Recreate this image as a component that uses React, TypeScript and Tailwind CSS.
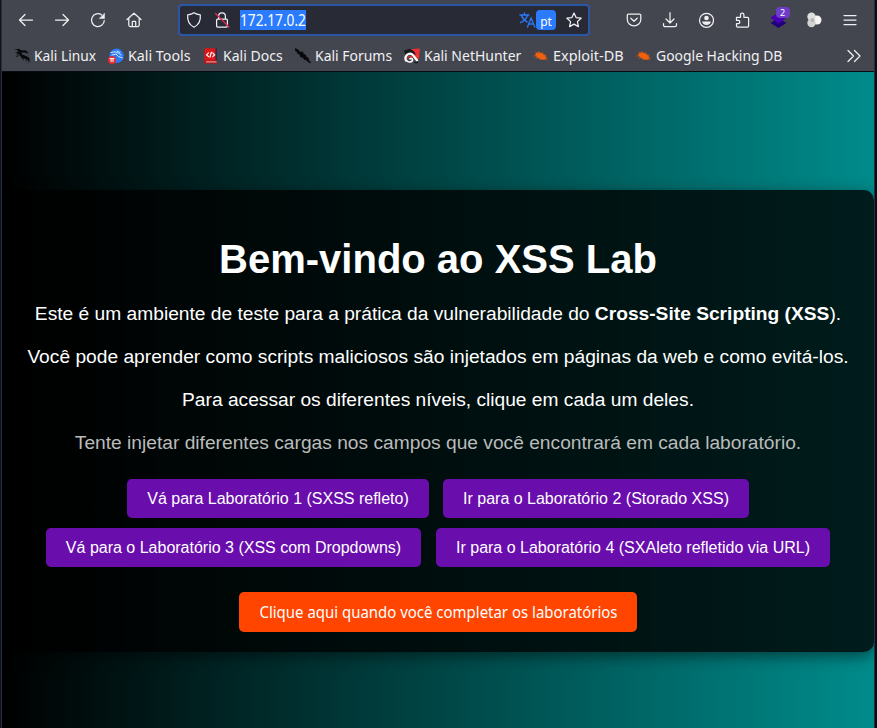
import React from "react";

const ui = "font-['Noto_Sans',sans-serif]";

function Icon({ children, size = 16 }: { children: React.ReactNode; size?: number }) {
  return (
    <svg
      width={size}
      height={size}
      viewBox="0 0 16 16"
      fill="none"
      stroke="currentColor"
      strokeWidth="1.25"
      strokeLinecap="round"
      strokeLinejoin="round"
      className="shrink-0"
    >
      {children}
    </svg>
  );
}

function ToolButton({ children }: { children: React.ReactNode }) {
  return <button className="flex h-8 w-9 items-center justify-center">{children}</button>;
}

const bookmarks = [
  {
    label: "Kali Linux",
    width: "w-[62px]",
    scale: "scale-x-[0.918]",
    icon: (
      <Icon>
        <path d="M.5 1.800 4.500.8l3 1.400 4.500.300L14.500 5l-1.300.6L11 4.400 7.500 4.600 8 6.600l3.500 1.200 3 1.400 1.300 2.300-.8 3.700-1-3.200-2.500-1.200-3.500-.6L6 7.600 5 6 1.500 7.200 4 5.200 1 4.800 4.600 3.600 3.500 2.300Z" fill="#08090b" stroke="none" />
        <path d="M8 9.500 9.500 12M12 11.500l.500 1.500M2.500 8.500 5 7.500" stroke="#08090b" strokeWidth=".8" />
      </Icon>
    ),
  },
  {
    label: "Kali Tools",
    width: "w-[63px]",
    scale: "scale-x-[0.95]",
    icon: (
      <Icon>
        <circle cx="8.600" cy="7.800" r="7.200" fill="#2a7af5" stroke="none" />
        <path d="M3 4.500 7 3.800l3.500 1.400L13 7M4 7l4-1 2.500 2.600 3.800 1.200M9 3l3 1.500" stroke="#d6e8ff" strokeWidth="1" />
        <circle cx="4" cy="12" r="4" fill="#e02b2e" stroke="none" />
        <path d="M2 10.600h4M3.100 10.700v3M5 10.700v3" stroke="#fff" strokeWidth="1" />
      </Icon>
    ),
  },
  {
    label: "Kali Docs",
    width: "w-[60px]",
    scale: "scale-x-[0.935]",
    icon: (
      <Icon>
        <path d="M1.500.3h12v12.500h-12z" fill="#e01414" stroke="none" />
        <path d="M12.400.3h1.600V13h-1.600z" fill="#272c54" stroke="none" />
        <path d="M1.500 12.600H14v3H1.500z" fill="#c21014" stroke="none" />
        <path d="M3 13.400h10.500v1H3z" fill="#e8b8b8" stroke="none" />
        <path d="m5.500 4.800-2 2 2 1.800m4.200-3.800 2 2-2 1.800M8.400 4.300 6.900 9.200" stroke="#fff" strokeWidth="1.200" />
      </Icon>
    ),
  },
  {
    label: "Kali Forums",
    width: "w-[77px]",
    scale: "scale-x-[0.93]",
    icon: (
      <Icon>
        <path d="M0 .5 3.500 2 5 4.400l2.500-.7L8.400 6l2.200 1 .6 2 2.200 1.200.4 2 2 2.800-3.300-1.400-.5-1.600-3-.6-.8-2L5.500 9 4.800 6.400 2.200 5.300 2.800 4 .8 3.200Z" fill="#07080a" stroke="#07080a" strokeWidth=".6" />
      </Icon>
    ),
  },
  {
    label: "Kali NetHunter",
    width: "w-[97px]",
    scale: "scale-x-[0.933]",
    icon: (
      <Icon>
        <path d="M5 1.200 15.800.6 15 10 12.500 13 8 6Z" fill="#ee3032" stroke="none" />
        <path d="M0 2.500 6 .8l4 2.400L12 7 7 5 2 9Z" fill="#15191f" stroke="none" />
        <path d="M2 12.500C0 8 4.500 4 8.500 6.600l4.500 5.600" stroke="#fff" strokeWidth="2.300" />
        <path d="M2.500 12.600c2 2.400 6 1.600 6-.8 0-1.200-1.500-1.800-2.600-1" stroke="#fff" strokeWidth="1.600" />
        <path d="M3.800 10.300c.6-2 3-2.600 4.600-.9" stroke="#e5282c" strokeWidth="1.300" />
        <path d="M11 14.500h2.500" stroke="#15191f" strokeWidth="1.300" />
      </Icon>
    ),
  },
  { label: "Exploit-DB", width: "w-[71px]", scale: "scale-x-[0.965]", icon: <Bug /> },
  { label: "Google Hacking DB", width: "w-[127px]", scale: "scale-x-[0.928]", icon: <Bug /> },
];

function Bug() {
  return (
    <Icon>
      <path d="M2.500 5.800C4 4 8 4.200 10.800 6.300c2.200 1.700 3.200 3.800 2.200 4.800-1.600 1.200-5.400.6-8-1.200C3 8.600 1.500 7 2.500 5.800Z" fill="#f0600f" stroke="none" />
      <path d="M4 5.500 2.800 4M6 5.200 5.800 3.600M8.800 5.600l1-1.200M11 7.300l2-.2M3 7.800.8 8M5 9.400 3 10.400M7.500 10.800 7 11.800M12 9.400l2 .4M12.600 11l1.400 1.200" stroke="#d9580f" strokeWidth=".8" />
    </Icon>
  );
}

function AddressBar() {
  return (
    <div className="flex h-8 w-[412px] items-center rounded border-2 border-[#2b56a5] bg-[#282a36]">
      <div className="ml-1.5 flex w-4 justify-center">
        <Icon>
          <path d="M8 .8C6.300 2 4 2.700 1.700 2.900 1.200 8.500 3.500 13 8 15.200c4.500-2.200 6.800-6.700 6.300-12.300C12 2.700 9.700 2 8 .8Z" />
        </Icon>
      </div>
      <div className="ml-3 flex w-4 justify-center">
        <Icon>
          <path d="M4.600 7V4.200a3.400 3.400 0 0 1 6.800 0V7M3.600 7.200h8.800a1 1 0 0 1 1 1V14a1 1 0 0 1-1 1H3.600a1 1 0 0 1-1-1V8.200a1 1 0 0 1 1-1Z" />
          <path d="M1.500 1.500 15 15" stroke="#e22850" />
        </Icon>
      </div>
      <div className={`${ui} ml-2.5 h-5 w-[66px] whitespace-nowrap bg-[#2a7bfd] text-[15.5px] leading-[21px] text-white`}>
        <span className="inline-block origin-left scale-x-[0.885]">172.17.0.2</span>
      </div>
      <div className="ml-auto flex items-center">
        <svg width="17" height="16" viewBox="0 0 17 16" fill="none" stroke="#2a78f6" strokeWidth="1.400" strokeLinecap="round">
          <path d="M1 3h9M5.500 1v2M8.500 3.200C7.500 6.500 5 9 1.500 10.600M2.500 3.500c1 3 3 5 5.600 6.400M8.500 15l3.600-9 3.700 9M9.800 12h4.800" />
        </svg>
        <span className={`${ui} flex h-5 w-5 items-center justify-center rounded bg-[#2a7bfd] pt-1 text-xs leading-4 text-white`}>
          pt
        </span>
        <span className="mr-1.5 ml-2.5">
          <Icon>
            <path d="m8 1 2.100 4.600 5 .600-3.700 3.400 1 5L8 12.100l-4.400 2.500 1-5L.9 6.200l5-.600Z" />
          </Icon>
        </span>
      </div>
    </div>
  );
}

function BrowserChrome() {
  return (
    <header className="h-[71px] shrink-0 bg-[#43464f] text-[#f0f0f2]">
      <div className="flex h-10 items-center pl-1.5">
        <ToolButton><Icon><path d="M14.500 8h-13M7 2.500 1.500 8 7 13.500" /></Icon></ToolButton>
        <ToolButton><Icon><path d="M1.500 8h13M9 2.500 14.500 8 9 13.500" /></Icon></ToolButton>
        <ToolButton>
          <Icon>
            <path d="M14.300 8.500A6.400 6.400 0 1 1 11.700 3" />
            <path d="M14.500 1.500v5h-5Z" fill="currentColor" strokeWidth=".5" />
          </Icon>
        </ToolButton>
        <ToolButton>
          <Icon>
            <path d="M1 7.500 8 1.200l7 6.300M2.800 6.200V13a1.500 1.500 0 0 0 1.500 1.500h7.400a1.500 1.500 0 0 0 1.500-1.500V6.200M6.300 14.300V10a.7.7 0 0 1 .7-.7h2a.7.7 0 0 1 .7.7v4.300" />
          </Icon>
        </ToolButton>
        <div className="ml-[26px]"><AddressBar /></div>
        <div className="ml-[26px] flex">
          <ToolButton>
            <Icon>
              <path d="M2.500 2h11A1.300 1.300 0 0 1 14.800 3.300V7.500a6.700 6.300 0 0 1-13.500 0V3.300A1.300 1.300 0 0 1 2.500 2ZM4.800 6.200 8 9.300l3.200-3.100" />
            </Icon>
          </ToolButton>
          <ToolButton><Icon><path d="M8 .7v10M4 7l4 4 4-4M1.500 11.500V13A1.700 1.700 0 0 0 3.200 14.700h9.600a1.700 1.700 0 0 0 1.700-1.700v-1.500" /></Icon></ToolButton>
          <ToolButton>
            <Icon>
              <circle cx="8.500" cy="8.300" r="7" />
              <circle cx="8.500" cy="6" r="2.300" fill="currentColor" stroke="none" />
              <path d="M4.200 9.600h8.600c0 2-2 3.400-4.300 3.400s-4.300-1.400-4.300-3.400Z" fill="currentColor" stroke="none" />
            </Icon>
          </ToolButton>
          <ToolButton>
            <Icon>
              <path d="M2.500 5.300h4V2.800a1.700 1.700 0 0 1 3.400 0v2.500h3.700a1 1 0 0 1 1 1V14a1 1 0 0 1-1 1H3.500a1 1 0 0 1-1-1v-2.300h1.700a1.600 1.600 0 0 0 0-3.300H2.500Z" />
            </Icon>
          </ToolButton>
          <ToolButton>
            <span className="relative flex">
              <svg width="17" height="16" viewBox="0 0 17 16">
                <path d="m.5 11 8-5 8 5-8 5Z" fill="#21007c" />
                <path d="m.5 5.800 8-5.500 8 5.500-8 6Z" fill="#4700b5" />
              </svg>
              <span className={`${ui} absolute -top-[5px] left-[6px] h-[11px] w-3.5 rounded-sm bg-[#6f3cc8] text-center text-[9px] leading-[11px] text-white`}>
                2
              </span>
            </span>
          </ToolButton>
          <ToolButton>
            <Icon>
              <g stroke="none">
                <circle cx="11" cy="8" r="4.500" fill="#f5f5f5" />
                <circle cx="5.500" cy="4.800" r="4.200" fill="#dfdfdf" />
                <circle cx="5.500" cy="11" r="4.200" fill="#d3d3d3" />
                <circle cx="6.500" cy="8" r="2" fill="#b4b4b4" />
              </g>
            </Icon>
          </ToolButton>
          <ToolButton><Icon><path d="M2 3.500h12M2 8h12M2 12.500h12" /></Icon></ToolButton>
        </div>
      </div>
      <nav className={`${ui} flex h-[31px] items-center gap-3 pl-3 text-[15px] leading-5`}>
        {bookmarks.map((b) => (
          <a key={b.label} className="flex items-center gap-1">
            {b.icon}
            <span className={`${b.width} pb-px whitespace-nowrap`}>
              <span className={`${b.scale} inline-block origin-left`}>{b.label}</span>
            </span>
          </a>
        ))}
        <span className="mr-3 ml-auto">
          <Icon><path d="m2 2.500 5.500 5.500L2 13.500M8.500 2.500 14 8l-5.500 5.500" /></Icon>
        </span>
      </nav>
    </header>
  );
}

function LabButton({ children, className }: { children: React.ReactNode; className: string }) {
  return (
    <button className={`${className} h-[39px] rounded-[5px] bg-[#6a0dad] whitespace-nowrap text-center text-base text-white`}>
      {children}
    </button>
  );
}

export default function App() {
  return (
    <div className="flex h-[728px] w-[877px] overflow-hidden bg-[#0c0e16] font-['Liberation_Sans',Arial,sans-serif]">
      <div className="w-0.5 shrink-0 border-r border-[#2b2d3a] bg-[#0b1420]" />
      <div className="flex w-[872px] shrink-0 flex-col overflow-hidden">
        <BrowserChrome />
        <main className="flex flex-1 flex-col border-t border-[#0a0b0e] bg-linear-to-r/srgb from-black to-[#008b8b] pt-[118px]">
          <section className="flex h-[462px] flex-col items-center rounded-[10px] bg-black/80 pt-[46px] text-white shadow-[0_4px_15px_rgba(0,0,0,0.5)]">
            <h1 className="h-[46px] text-[40px] leading-[46px] font-bold whitespace-nowrap">Bem-vindo ao XSS Lab</h1>
            <div className="mt-[21px] flex flex-col items-center gap-[21px] text-[19.2px] leading-[22px] whitespace-nowrap">
              <p>
                Este é um ambiente de teste para a prática da vulnerabilidade do <strong>Cross-Site Scripting (XSS</strong>).
              </p>
              <p>Você pode aprender como scripts maliciosos são injetados em páginas da web e como evitá-los.</p>
              <p>Para acessar os diferentes níveis, clique em cada um deles.</p>
              <p className="text-[#bbbbbb]">Tente injetar diferentes cargas nos campos que você encontrará em cada laboratório.</p>
            </div>
            <div className="mt-[25px] flex gap-3.5">
              <LabButton className="w-[302px]">Vá para Laboratório 1 (SXSS refleto)</LabButton>
              <LabButton className="w-[306px]">Ir para o Laboratório 2 (Storado XSS)</LabButton>
            </div>
            <div className="mt-2.5 flex gap-[15px]">
              <LabButton className="w-[375px]">Vá para o Laboratório 3 (XSS com Dropdowns)</LabButton>
              <LabButton className="w-[394px]">Ir para o Laboratório 4 (SXAleto refletido via URL)</LabButton>
            </div>
            <button className={`${ui} mt-[25px] h-10 w-[398px] rounded-[5px] bg-[#ff4500] text-base whitespace-nowrap`}>
              <span className="inline-block scale-x-[0.935]">Clique aqui quando você completar os laboratórios</span>
            </button>
          </section>
        </main>
      </div>
      <div className="w-[3px] shrink-0 border-l border-[#2b2d3a] bg-[#090c15]" />
    </div>
  );
}
